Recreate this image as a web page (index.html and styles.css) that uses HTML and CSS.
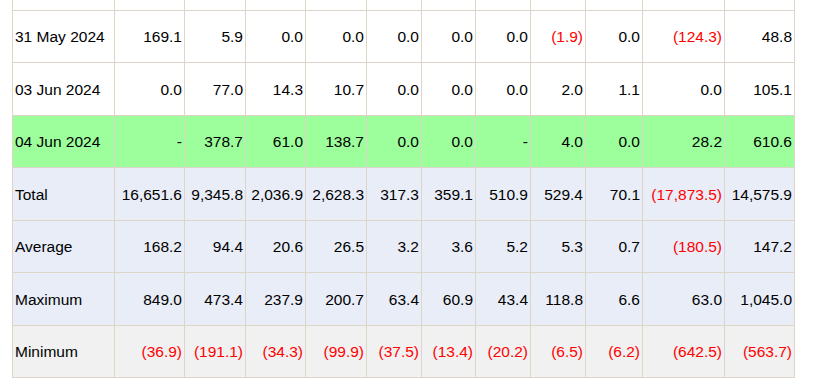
FILE: index.html
```html
<!DOCTYPE html>
<html>
<head>
<meta charset="utf-8">
<link rel="stylesheet" href="styles.css">
</head>
<body>
<div class="wrap">
<table class="grid">
<colgroup>
<col class="c-date"><col class="c70"><col class="c61"><col class="c60"><col class="c61"><col class="c55"><col class="c54"><col class="c55"><col class="c55"><col class="c57"><col class="c82"><col class="c70">
</colgroup>
<tbody>
<tr class="partial"><td></td><td></td><td></td><td></td><td></td><td></td><td></td><td></td><td></td><td></td><td></td><td></td></tr>
<tr><td class="lbl">31 May 2024</td><td>169.1</td><td>5.9</td><td>0.0</td><td>0.0</td><td>0.0</td><td>0.0</td><td>0.0</td><td class="neg">(1.9)</td><td>0.0</td><td class="neg">(124.3)</td><td>48.8</td></tr>
<tr><td class="lbl">03 Jun 2024</td><td>0.0</td><td>77.0</td><td>14.3</td><td>10.7</td><td>0.0</td><td>0.0</td><td>0.0</td><td>2.0</td><td>1.1</td><td>0.0</td><td>105.1</td></tr>
<tr class="today"><td class="lbl">04 Jun 2024</td><td>-</td><td>378.7</td><td>61.0</td><td>138.7</td><td>0.0</td><td>0.0</td><td>-</td><td>4.0</td><td>0.0</td><td>28.2</td><td>610.6</td></tr>
<tr class="stat"><td class="lbl">Total</td><td>16,651.6</td><td>9,345.8</td><td>2,036.9</td><td>2,628.3</td><td>317.3</td><td>359.1</td><td>510.9</td><td>529.4</td><td>70.1</td><td class="neg">(17,873.5)</td><td>14,575.9</td></tr>
<tr class="stat"><td class="lbl">Average</td><td>168.2</td><td>94.4</td><td>20.6</td><td>26.5</td><td>3.2</td><td>3.6</td><td>5.2</td><td>5.3</td><td>0.7</td><td class="neg">(180.5)</td><td>147.2</td></tr>
<tr class="stat"><td class="lbl">Maximum</td><td>849.0</td><td>473.4</td><td>237.9</td><td>200.7</td><td>63.4</td><td>60.9</td><td>43.4</td><td>118.8</td><td>6.6</td><td>63.0</td><td>1,045.0</td></tr>
<tr class="minrow"><td class="lbl">Minimum</td><td class="neg">(36.9)</td><td class="neg">(191.1)</td><td class="neg">(34.3)</td><td class="neg">(99.9)</td><td class="neg">(37.5)</td><td class="neg">(13.4)</td><td class="neg">(20.2)</td><td class="neg">(6.5)</td><td class="neg">(6.2)</td><td class="neg">(642.5)</td><td class="neg">(563.7)</td></tr>
</tbody>
</table>
</div>
</body>
</html>
```

FILE: styles.css
```css
html, body {
  margin: 0;
  padding: 0;
  background: #ffffff;
}

.wrap {
  padding-left: 12px;
}

.grid {
  border-collapse: collapse;
  table-layout: fixed;
  width: 783px;
  font-family: "Liberation Sans", Arial, sans-serif;
  font-size: 15.5px;
  color: #000000;
}

.c-date { width: 102px; }
.c70 { width: 70px; }
.c61 { width: 61px; }
.c60 { width: 60px; }
.c55 { width: 55px; }
.c54 { width: 54px; }
.c57 { width: 57px; }
.c82 { width: 82px; }

.grid td {
  border: 1px solid #ddd6c8;
  height: 49.5px;
  padding: 2px 2px 0 2px;
  text-align: right;
  vertical-align: middle;
  white-space: nowrap;
  overflow: hidden;
}

.grid td.lbl {
  text-align: left;
}

.grid tr.partial td {
  border-top: 0;
  height: 9.5px;
  padding: 0;
}

.grid td.neg {
  color: #ff0000;
}

.today td {
  background: #9cff9c;
}

.stat td {
  background: #e9edf8;
}

.minrow td {
  background: #f1f1f1;
}
```
